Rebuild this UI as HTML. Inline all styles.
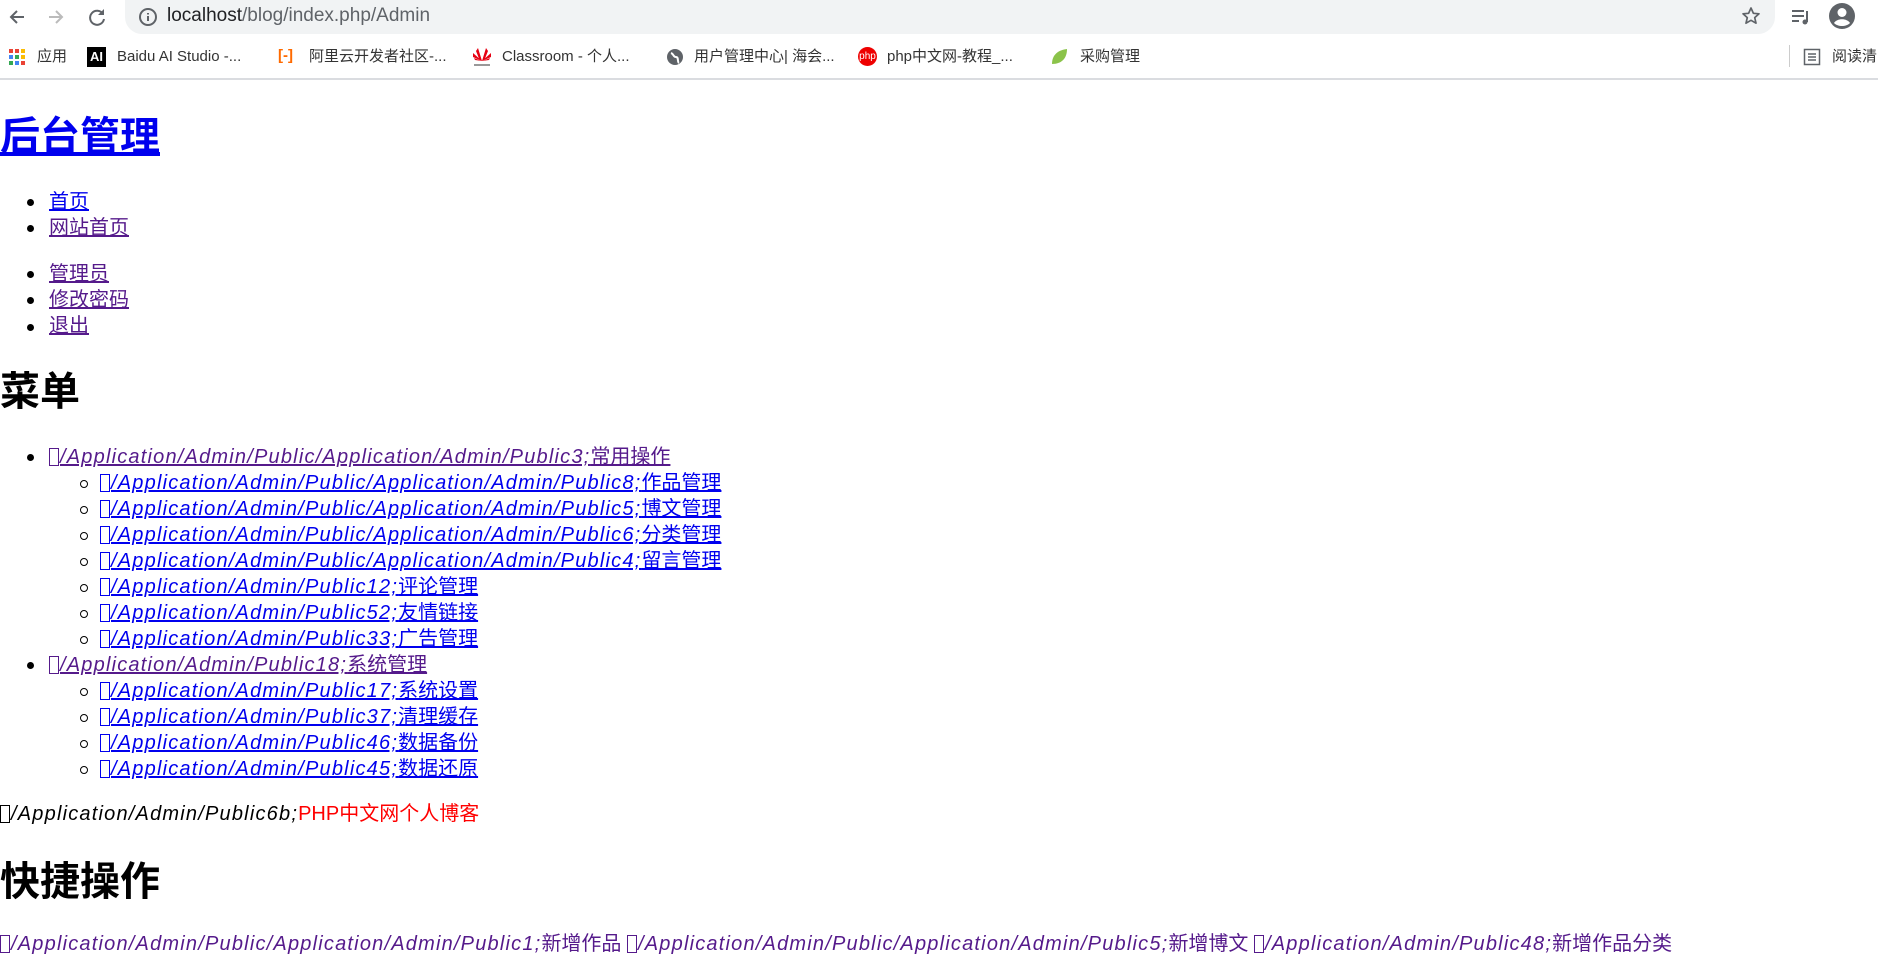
<!DOCTYPE html>
<html><head><meta charset="utf-8"><style>
*{box-sizing:border-box}
body{margin:0;width:1878px;height:952px;overflow:hidden;background:#fff;font-family:"Liberation Sans","Noto Sans CJK SC",sans-serif;position:relative}
.abs{position:absolute;white-space:nowrap}
.bar{position:absolute;left:0;top:0;width:1878px;height:80px;background:#fff;border-bottom:2px solid #dadce0}
.addr{position:absolute;left:125px;top:0;width:1650px;height:34px;background:#f1f3f4;border-radius:0 0 17px 17px}
.bm{position:absolute;top:46px;font-size:15px;color:#333;line-height:22px;white-space:nowrap}
.ic{position:absolute;top:48px;width:18px;height:18px}
a{color:#0000ee}
a.v{color:#551a8b}
.line{position:absolute;left:0;font-size:20px;line-height:26px;white-space:nowrap}
.b1{position:absolute;left:27px;width:7px;height:7px;border-radius:50%;background:#000}
.b2{position:absolute;left:80px;width:8px;height:8px;border-radius:50%;border:1.3px solid #000}
.box{display:inline-block;width:10px;height:18px;border:1px solid currentColor;vertical-align:-3px;margin-right:1px}
i{font-style:italic;letter-spacing:1.2px}
h{font-weight:bold;position:absolute;left:0;white-space:nowrap;color:#000}
</style></head><body>
<div class="bar">
 <div class="addr"></div>
 <svg class="abs" style="left:6px;top:6px" width="22" height="22" viewBox="0 0 22 22"><path d="M18 11H5M11 5l-6 6 6 6" stroke="#5f6368" stroke-width="2" fill="none"/></svg>
 <svg class="abs" style="left:45px;top:6px" width="22" height="22" viewBox="0 0 22 22"><path d="M4 11h13M11 5l6 6-6 6" stroke="#bbb" stroke-width="2" fill="none"/></svg>
 <svg class="abs" style="left:86px;top:6px" width="22" height="22" viewBox="0 0 22 22"><path d="M17 8A7 7 0 1 0 18 13" stroke="#5f6368" stroke-width="2" fill="none"/><path d="M18 3v6h-6z" fill="#5f6368"/></svg>
 <svg class="abs" style="left:138px;top:7px" width="20" height="20" viewBox="0 0 20 20"><circle cx="10" cy="10" r="8" stroke="#5f6368" stroke-width="2" fill="none"/><path d="M10 9v5M10 6v1.5" stroke="#5f6368" stroke-width="2"/></svg>
 <div class="abs" style="left:167px;top:5px;font-size:19px;color:#202124">localhost<span style="color:#5f6368">/blog/index.php/Admin</span></div>
 <svg class="abs" style="left:1741px;top:6px" width="20" height="20" viewBox="0 0 20 20"><path d="M10 2l2.4 5.3 5.6.5-4.3 3.8 1.3 5.6L10 14.3 5 17.2l1.3-5.6L2 7.8l5.6-.5z" fill="none" stroke="#5f6368" stroke-width="1.7" stroke-linejoin="round"/></svg>
 <svg class="abs" style="left:1790px;top:7px" width="22" height="20" viewBox="0 0 22 20"><path d="M2 4h12M2 9h12M2 14h7" stroke="#5f6368" stroke-width="2"/><path d="M17 4v11" stroke="#5f6368" stroke-width="2"/><circle cx="15" cy="15" r="2.5" fill="#5f6368"/></svg>
 <svg class="abs" style="left:1828px;top:2px" width="28" height="28" viewBox="0 0 28 28"><circle cx="14" cy="14" r="13" fill="#5f6368"/><circle cx="14" cy="10.5" r="4.5" fill="#fff"/><path d="M6 21c3-5 13-5 16 0c-4 4-12 4-16 0z" fill="#fff"/></svg>
 <svg class="ic" style="left:8px" viewBox="0 0 18 18"><g><rect x="1" y="1" width="4" height="4" fill="#ea4335"/><rect x="7" y="1" width="4" height="4" fill="#ea4335"/><rect x="13" y="1" width="4" height="4" fill="#fbbc05"/><rect x="1" y="7" width="4" height="4" fill="#4285f4"/><rect x="7" y="7" width="4" height="4" fill="#34a853"/><rect x="13" y="7" width="4" height="4" fill="#fbbc05"/><rect x="1" y="13" width="4" height="4" fill="#34a853"/><rect x="7" y="13" width="4" height="4" fill="#4285f4"/><rect x="13" y="13" width="4" height="4" fill="#ea4335"/></g></svg>
 <div class="bm" style="left:37px">应用</div>
 <div class="abs" style="left:87px;top:47px;width:19px;height:20px;background:#000;color:#fff;font-size:13px;font-weight:bold;text-align:center;line-height:20px">AI</div>
 <div class="bm" style="left:117px">Baidu AI Studio -...</div>
 <div class="abs" style="left:278px;top:47px;font-size:15px;color:#ff6a00;font-weight:bold">[-]</div>
 <div class="bm" style="left:309px">阿里云开发者社区-...</div>
 <svg class="abs" style="left:472px;top:46px" width="20" height="22" viewBox="0 0 20 22"><path d="M10 15L6 2 4 5 8 15zM10 15l4-13 2 3-4 10zM10 15L1 7l0 4zM10 15l9-8 0 4zM10 15L3 14l-1-2zM10 15l7-1 1-2z" fill="#e60012"/><rect x="2" y="18" width="16" height="2" fill="#999"/></svg>
 <div class="bm" style="left:502px">Classroom - 个人...</div>
 <svg class="ic" style="left:666px" viewBox="0 0 18 18"><circle cx="9" cy="9" r="8" fill="#5f6368"/><path d="M5 5c3 1 2 4 5 4s1 5 3 6" stroke="#fff" stroke-width="2" fill="none"/></svg>
 <div class="bm" style="left:694px">用户管理中心| 海会...</div>
 <div class="abs" style="left:858px;top:47px;width:19px;height:19px;border-radius:50%;background:#e00;color:#fff;font-size:10px;text-align:center;line-height:19px">php</div>
 <div class="bm" style="left:887px">php中文网-教程_...</div>
 <svg class="ic" style="left:1050px" viewBox="0 0 18 18"><path d="M2 16C2 6 9 2 17 1c0 9-5 15-15 15z" fill="#8bc34a"/></svg>
 <div class="bm" style="left:1080px">采购管理</div>
 <div class="abs" style="left:1789px;top:45px;width:1px;height:22px;background:#ccc"></div>
 <svg class="ic" style="left:1803px" viewBox="0 0 18 18"><rect x="1.5" y="1.5" width="15" height="15" fill="none" stroke="#5f6368" stroke-width="1.5"/><path d="M5 6h8M5 9h8M5 12h8" stroke="#5f6368" stroke-width="1.5"/></svg>
 <div class="bm" style="left:1832px">阅读清</div>
</div>

<h style="top:111px;font-size:40px;line-height:52px"><a href="#" style="color:#0000ee">后台管理</a></h>

<div class="b1" style="top:199px"></div><div class="line" style="top:189px;left:49px"><a href="#">首页</a></div>
<div class="b1" style="top:225px"></div><div class="line" style="top:215px;left:49px"><a class="v" href="#">网站首页</a></div>

<div class="b1" style="top:271px"></div><div class="line" style="top:261px;left:49px"><a class="v" href="#">管理员</a></div>
<div class="b1" style="top:297px"></div><div class="line" style="top:287px;left:49px"><a class="v" href="#">修改密码</a></div>
<div class="b1" style="top:324px"></div><div class="line" style="top:313px;left:49px"><a class="v" href="#">退出</a></div>

<h style="top:366px;font-size:40px;line-height:52px">菜单</h>

<div class="b1" style="top:454px"></div><div class="line" style="top:444px;left:49px"><a class="v" href="#"><i><span class="box"></span>/Application/Admin/Public/Application/Admin/Public3;</i>常用操作</a></div>
<div class="b2" style="top:480px"></div><div class="line" style="top:470px;left:100px"><a href="#"><i><span class="box"></span>/Application/Admin/Public/Application/Admin/Public8;</i>作品管理</a></div>
<div class="b2" style="top:506px"></div><div class="line" style="top:496px;left:100px"><a href="#"><i><span class="box"></span>/Application/Admin/Public/Application/Admin/Public5;</i>博文管理</a></div>
<div class="b2" style="top:532px"></div><div class="line" style="top:522px;left:100px"><a href="#"><i><span class="box"></span>/Application/Admin/Public/Application/Admin/Public6;</i>分类管理</a></div>
<div class="b2" style="top:558px"></div><div class="line" style="top:548px;left:100px"><a href="#"><i><span class="box"></span>/Application/Admin/Public/Application/Admin/Public4;</i>留言管理</a></div>
<div class="b2" style="top:584px"></div><div class="line" style="top:574px;left:100px"><a href="#"><i><span class="box"></span>/Application/Admin/Public12;</i>评论管理</a></div>
<div class="b2" style="top:610px"></div><div class="line" style="top:600px;left:100px"><a href="#"><i><span class="box"></span>/Application/Admin/Public52;</i>友情链接</a></div>
<div class="b2" style="top:636px"></div><div class="line" style="top:626px;left:100px"><a href="#"><i><span class="box"></span>/Application/Admin/Public33;</i>广告管理</a></div>
<div class="b1" style="top:662px"></div><div class="line" style="top:652px;left:49px"><a class="v" href="#"><i><span class="box"></span>/Application/Admin/Public18;</i>系统管理</a></div>
<div class="b2" style="top:688px"></div><div class="line" style="top:678px;left:100px"><a href="#"><i><span class="box"></span>/Application/Admin/Public17;</i>系统设置</a></div>
<div class="b2" style="top:714px"></div><div class="line" style="top:704px;left:100px"><a href="#"><i><span class="box"></span>/Application/Admin/Public37;</i>清理缓存</a></div>
<div class="b2" style="top:740px"></div><div class="line" style="top:730px;left:100px"><a href="#"><i><span class="box"></span>/Application/Admin/Public46;</i>数据备份</a></div>
<div class="b2" style="top:766px"></div><div class="line" style="top:756px;left:100px"><a href="#"><i><span class="box"></span>/Application/Admin/Public45;</i>数据还原</a></div>

<div class="line" style="top:801px"><i><span class="box"></span>/Application/Admin/Public6b;</i><span style="color:#f00">PHP中文网个人博客</span></div>

<h style="top:856px;font-size:40px;line-height:52px">快捷操作</h>

<div class="line" style="top:931px;color:#551a8b"><i><span class="box"></span>/Application/Admin/Public/Application/Admin/Public1;</i>新增作品 <i><span class="box"></span>/Application/Admin/Public/Application/Admin/Public5;</i>新增博文 <i><span class="box"></span>/Application/Admin/Public48;</i>新增作品分类</div>
</body></html>
